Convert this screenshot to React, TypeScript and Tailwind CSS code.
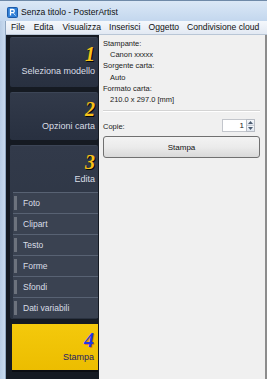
import React from 'react'

const font = { fontFamily: '"Liberation Sans", Arial, sans-serif' }

function AppIcon() {
  return (
    <svg width="11" height="11" viewBox="0 0 11 11" className="shrink-0">
      <rect x="0.5" y="0.5" width="10" height="10" rx="1" fill="#2f7fd6" stroke="#1d5aa8" />
      <path d="M3.5 8.5V2.5h2.2a1.6 1.6 0 0 1 0 3.2H3.5" fill="none" stroke="#fff" strokeWidth="1.3" />
      <path d="M6.5 6.2l2 2.3" stroke="#cfe6ff" strokeWidth="1" />
    </svg>
  )
}

function StepCard({ num, label, yellow }: { num: string; label: string; yellow?: boolean }) {
  return (
    <div
      className={
        yellow
          ? 'h-[48px] ml-[2px] bg-gradient-to-b from-[#f4c90c] to-[#ecbd00] border-b-2 border-[#0b0d12] flex flex-col items-end pr-[4px] pt-[6px]'
          : 'flex flex-col items-end pr-[3px] pt-[6px]'
      }
    >
      <span
        className={
          yellow
            ? 'text-[20px] leading-[20px] italic font-bold text-[#1f36e8] [text-shadow:1px_1px_0_#e8791a]'
            : 'text-[20px] leading-[20px] italic font-bold text-[#f8c21a] [text-shadow:1px_1px_0_#05070a]'
        }
        style={{ fontFamily: '"Liberation Serif", "Times New Roman", serif' }}
      >
        {num}
      </span>
      <span className={yellow ? 'mt-[2px] text-[9px] leading-[11px] text-[#241a66]' : 'mt-[2px] text-[9px] leading-[11px] text-[#d9dee6]'}>
        {label}
      </span>
    </div>
  )
}

const subItems = ['Foto', 'Clipart', 'Testo', 'Forme', 'Sfondi', 'Dati variabili']

export default function App() {
  return (
    <div className="w-[267px] h-[379px] flex flex-col overflow-hidden bg-[#f0f0f0]" style={font}>
      {/* title bar */}
      <div className="h-[21px] shrink-0 flex items-center gap-[3px] pl-[7px] pt-[2px] bg-gradient-to-b from-[#dbe8f6] to-[#c3d7ee] border-t border-[#6f8aa8]">
        <AppIcon />
        <span className="text-[8.6px] text-[#111]">Senza titolo - PosterArtist</span>
      </div>

      <div className="flex flex-1 min-h-0">
        {/* window frame */}
        <div className="w-[6px] shrink-0 bg-gradient-to-r from-[#b8cde6] to-[#c9dbef] border-r border-[#8fa6c0]" />

        <div className="flex-1 flex flex-col min-w-0">
          {/* menu bar */}
          <div className="h-[14px] shrink-0 flex items-center text-[8.6px] text-[#111] bg-gradient-to-b from-[#f5f8fc] to-[#e2e9f3] border-b border-[#b9c6d6]">
            <span className="ml-[5px]">File</span>
            <span className="ml-[9px]">Edita</span>
            <span className="ml-[9px]">Visualizza</span>
            <span className="ml-[8px]">Inserisci</span>
            <span className="ml-[8px]">Oggetto</span>
            <span className="ml-[8px]">Condivisione cloud</span>
          </div>

          <div className="flex flex-1 min-h-0">
            {/* step panel */}
            <div className="w-[93px] shrink-0 bg-[#151a22] pl-[4px] pr-[1px] pt-[2px] flex flex-col gap-[5px]">
              <div className="h-[50px] rounded-[2px] bg-gradient-to-b from-[#323a4a] to-[#283040] border-t border-[#3c4556]">
                <StepCard num="1" label="Seleziona modello" />
              </div>
              <div className="h-[48px] rounded-[2px] bg-gradient-to-b from-[#323a4a] to-[#283040] border-t border-[#3c4556]">
                <StepCard num="2" label="Opzioni carta" />
              </div>
              <div className="rounded-[2px] bg-gradient-to-b from-[#323a4a] to-[#2a3240] border-t border-[#3c4556] pb-[1px]">
                <div className="h-[46px]">
                  <StepCard num="3" label="Edita" />
                </div>
                <div className="ml-[3px]">
                  {subItems.map(s => (
                    <div key={s} className="h-[21px] flex items-center border-t border-[#586273] bg-[#3a4251]">
                      <div className="w-[3px] h-[14px] ml-[1px] bg-[#6c727d]" />
                      <span className="ml-[6px] text-[8.5px] text-[#d9dee6]">{s}</span>
                    </div>
                  ))}
                </div>
              </div>
              <StepCard num="4" label="Stampa" yellow />
            </div>

            {/* print panel */}
            <div className="flex-1 min-w-0 bg-[#f0f0f0] pl-[4px] pr-[5px] pt-[3px] text-[7.5px] leading-[11.2px] text-[#1a1a1a]">
              <div>Stampante:</div>
              <div className="pl-[7px]">Canon xxxxx</div>
              <div>Sorgente carta:</div>
              <div className="pl-[7px]">Auto</div>
              <div>Formato carta:</div>
              <div className="pl-[7px]">210.0 x 297.0 [mm]</div>
              <div className="mt-[5px] h-[2px] border-t border-[#d4d4d4] border-b border-b-white" />

              <div className="mt-[7px] flex items-end justify-between pr-[5px]">
                <span className="leading-[10px]">Copie:</span>
                <div className="flex h-[13px]">
                  <div className="w-[24px] h-full bg-white border border-[#c3c6cc] border-r-0 flex items-center justify-end pr-[2px] text-[8px] leading-none text-[#222]">
                    1
                  </div>
                  <div className="w-[9px] h-full flex flex-col border border-[#b7bcc4]">
                    <div className="flex-1 flex items-center justify-center bg-gradient-to-b from-[#f6f8fb] to-[#e0e6ee] border-b border-[#c8cdd5]">
                      <svg width="5" height="3" viewBox="0 0 5 3"><path d="M0 3L2.5 0L5 3Z" fill="#4a5a70" /></svg>
                    </div>
                    <div className="flex-1 flex items-center justify-center bg-gradient-to-b from-[#f6f8fb] to-[#e0e6ee]">
                      <svg width="5" height="3" viewBox="0 0 5 3"><path d="M0 0L2.5 3L5 0Z" fill="#4a5a70" /></svg>
                    </div>
                  </div>
                </div>
              </div>

              <button className="mt-[4px] w-full h-[22px] rounded-[3px] border border-[#707070] bg-gradient-to-b from-[#f3f3f3] via-[#ebebeb] to-[#d9d9d9] text-[8px] text-[#111] flex items-center justify-center">
                Stampa
              </button>
            </div>

            <div className="w-[2px] shrink-0 bg-[#8c8c8c]" />
          </div>
        </div>
      </div>
    </div>
  )
}
